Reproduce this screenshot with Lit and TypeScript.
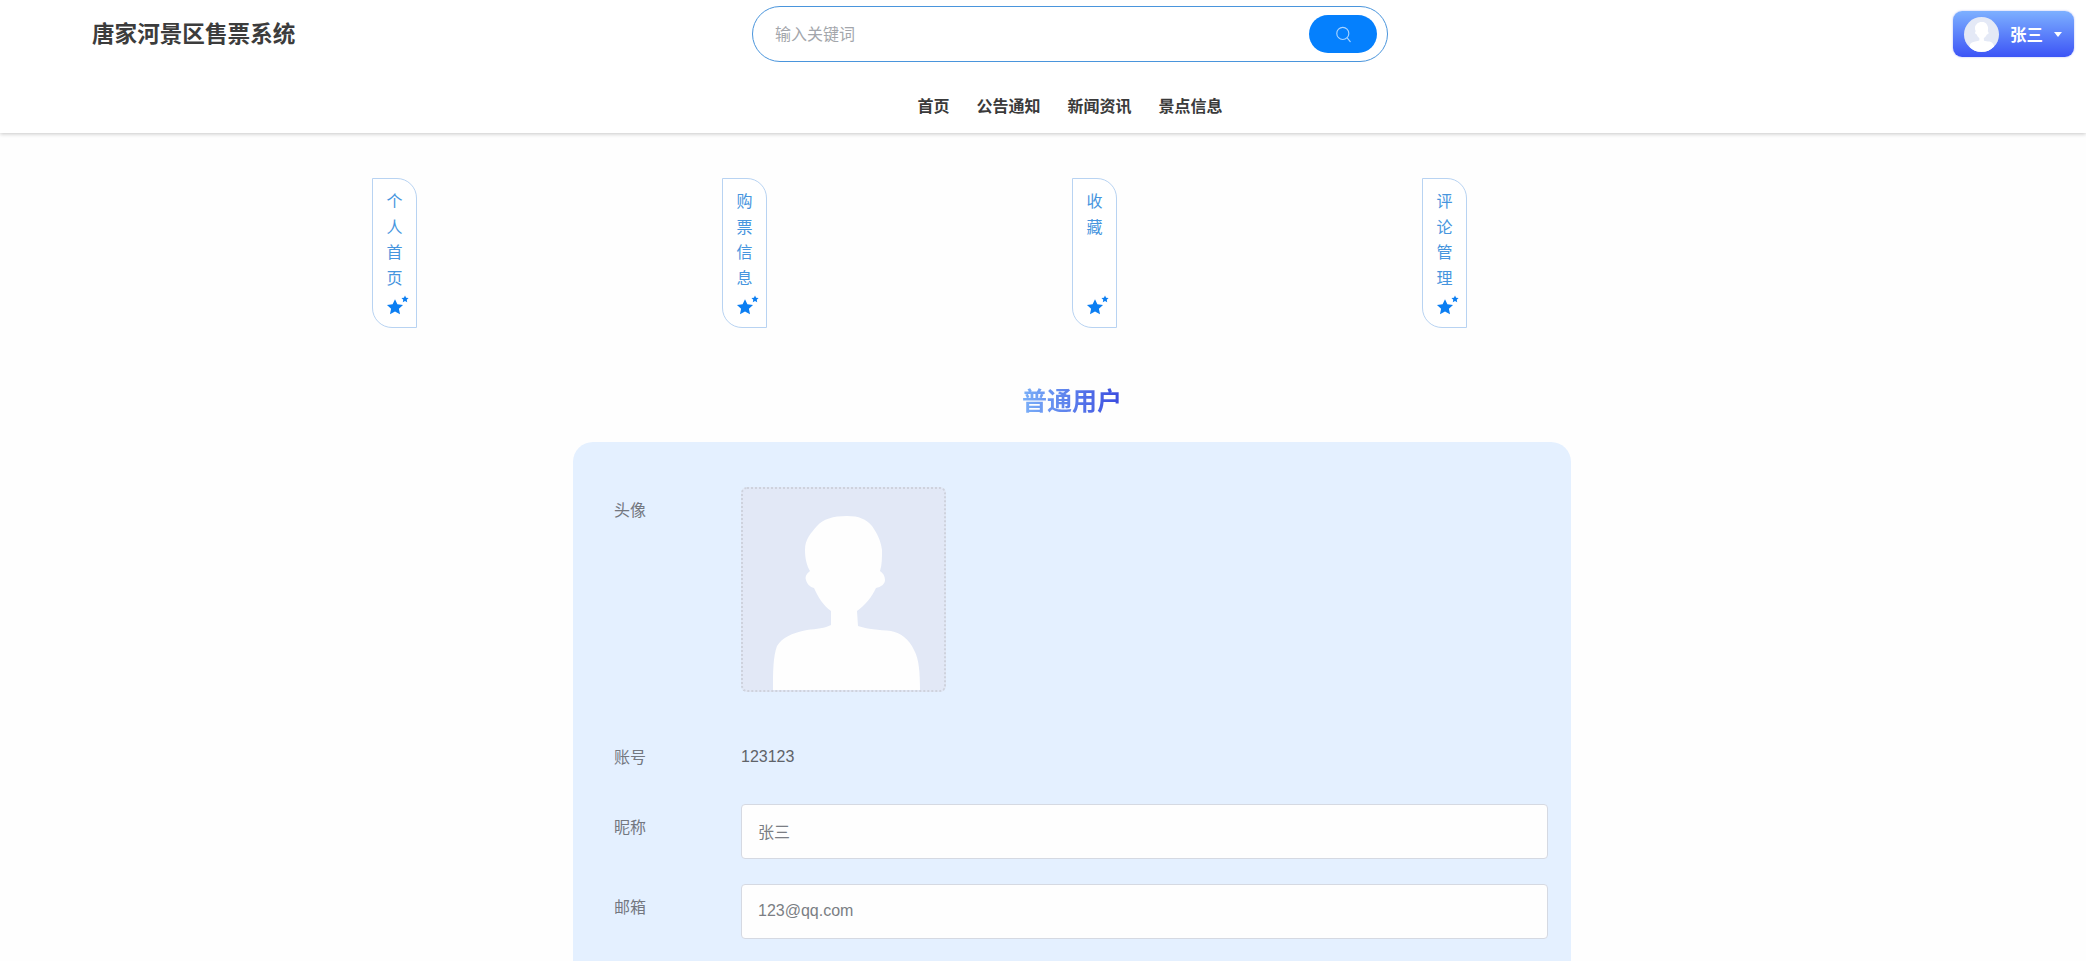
import { LitElement, html, css, svg } from "lit";
import { customElement } from "lit/decorators.js";

const star = svg`<path d="M12 1.5l3.2 6.9 7.5.9-5.5 5.1 1.5 7.4L12 18.1l-6.7 3.7 1.5-7.4L1.3 9.3l7.5-.9z"/>`;
const person = svg`<path d="M106 29C92 29 82 32 76 39C70 46 64 52 64 63C64 72 66 79 69 84C65 87 64 90 65 93C66 97 69 100 73 101C77 110 82 118 90 124L90 138C84 141 76 142 66 143C50 146 41 151 36 159C32 170 32 185 32 203L179 203C179 185 178 172 173 163C168 152 160 146 150 144C138 143 126 142 117 139L116 124C124 118 131 110 135 101C140 100 144 97 144 93C144 89 142 86 139 84C141 78 141 71 141 63C140 54 136 46 131 39C125 32 118 29 106 29Z"/>`;

@customElement("app-root")
export class AppRoot extends LitElement {
  static styles = css`
    :host {
      display: block;
      height: 961px;
      overflow: hidden;
      background: #fefefe;
      font-family: "Noto Sans CJK SC", "Liberation Sans", sans-serif;
    }
    .header {
      height: 133px;
      background: #fff;
      box-shadow: 0 1px 4px rgba(0, 0, 0, 0.22);
      position: relative;
    }
    .top {
      display: grid;
      grid-template-columns: 752px 636px 1fr;
      height: 73px;
      align-items: start;
    }
    .brand {
      padding: 15px 0 0 92px;
      font-size: 22.6px;
      line-height: 36px;
      font-weight: 700;
      color: #3c3c3c;
    }
    .search {
      margin-top: 6px;
      height: 56px;
      box-sizing: border-box;
      border: 1.5px solid #4a95dc;
      border-radius: 28px;
      display: flex;
      align-items: center;
      padding: 0 10px 0 21px;
      background: #fff;
    }
    .search input {
      flex: 1;
      min-width: 0;
      border: 0;
      outline: 0;
      background: transparent;
      padding: 0 2px 2px 1px;
      font: 400 16px "Noto Sans CJK SC", "Liberation Sans", sans-serif;
      color: #555;
    }
    .search input::placeholder {
      color: #a3a6ab;
    }
    .search-btn {
      width: 68px;
      height: 38px;
      border-radius: 19px;
      background: #0580fd;
      display: flex;
      align-items: center;
      justify-content: center;
    }
    .search-btn svg {
      width: 17px;
      height: 17px;
    }
    .user-wrap {
      display: flex;
      justify-content: flex-end;
      padding: 11px 12px 0 0;
    }
    .user {
      width: 121px;
      height: 46px;
      box-sizing: border-box;
      border-radius: 9px;
      background: linear-gradient(180deg, #7db0ff, #3c54f6);
      display: flex;
      align-items: center;
      padding-left: 11px;
      color: #fff;
      font-size: 16.5px;
      box-shadow: 0 0 2px rgba(80, 100, 240, 0.5);
    }
    .avatar {
      width: 35px;
      height: 35px;
      border-radius: 50%;
      background: #e4e9f6;
      overflow: hidden;
      flex: none;
    }
    .avatar svg {
      width: 100%;
      height: 100%;
      display: block;
    }
    .user .name {
      margin-left: 11px;
      font-weight: 700;
    }
    .caret {
      margin-left: 11px;
      width: 0;
      height: 0;
      border-left: 4.5px solid transparent;
      border-right: 4.5px solid transparent;
      border-top: 5px solid #fff;
    }
    .nav {
      display: flex;
      justify-content: center;
      gap: 27px;
      padding: 18px 0 0 54px;
      font-size: 16px;
      line-height: 28px;
      font-weight: 700;
      color: #3a3a3a;
    }
    .tabs {
      width: 1095px;
      margin: 45px 0 0 372px;
      display: flex;
      justify-content: space-between;
    }
    .tab {
      position: relative;
      width: 45px;
      height: 150px;
      box-sizing: border-box;
      padding-top: 9px;
      border: 1.5px solid #b8d3f2;
      border-radius: 0 20px 0 20px;
      background: #fff;
      color: #4695de;
      font-size: 16px;
      line-height: 25.5px;
      text-align: center;
    }
    .tab div {
      height: 25.5px;
    }
    .star {
      position: absolute;
      left: 13px;
      top: 119px;
      width: 18px;
      height: 18px;
      fill: #0b7ef2;
    }
    .star.mini {
      left: 28px;
      top: 116px;
      width: 8px;
      height: 8px;
    }
    .heading {
      margin: 51px 0 23px;
      padding-left: 58px;
      text-align: center;
      font-size: 25px;
      line-height: 40px;
      font-weight: 700;
    }
    .heading span {
      background: linear-gradient(90deg, #7bb0f8, #3a4adf);
      -webkit-background-clip: text;
      background-clip: text;
      color: transparent;
    }
    .card {
      width: 998px;
      height: 560px;
      margin-left: 573px;
      box-sizing: border-box;
      padding: 45px 23px 0 41px;
      border-radius: 20px;
      background: #e4f0ff;
    }
    .row {
      display: flex;
      align-items: flex-start;
      margin-bottom: 25px;
    }
    .row.photo {
      margin-bottom: 43px;
    }
    .label {
      width: 127px;
      flex: none;
      font-size: 16px;
      line-height: 44px;
      color: #73777f;
    }
    .label.tight {
      line-height: 42px;
    }
    .value {
      font: 400 16px/44px "Liberation Sans", "Noto Sans CJK SC", sans-serif;
      color: #5f6369;
    }
    .photo-box {
      width: 205px;
      height: 205px;
      box-sizing: border-box;
      border: 2px dotted #ced2dd;
      border-radius: 6px;
      background: #e2e8f6;
      overflow: hidden;
    }
    .photo-box svg {
      width: 205px;
      height: 205px;
      display: block;
      margin: -2px;
    }
    .field {
      flex: 1;
      min-width: 0;
      height: 55px;
      box-sizing: border-box;
      border: 1.5px solid #d5d9e2;
      border-radius: 4px;
      background: #fefefe;
      padding: 0 16px 2px;
      outline: 0;
      font: 400 16px "Liberation Sans", "Noto Sans CJK SC", sans-serif;
      color: #7b7e84;
    }
  `;

  private tabs = [
    ["个", "人", "首", "页"],
    ["购", "票", "信", "息"],
    ["收", "藏"],
    ["评", "论", "管", "理"],
  ];

  render() {
    return html`
      <header class="header">
        <div class="top">
          <div class="brand">唐家河景区售票系统</div>
          <div class="search">
            <input placeholder="输入关键词" />
            <div class="search-btn">
              <svg viewBox="0 0 24 24" fill="none" stroke="#a9d3ff" stroke-width="1.6" stroke-linecap="round">
                <circle cx="11" cy="10.5" r="8.5" />
                <path d="M17.5 17l4 5" />
              </svg>
            </div>
          </div>
          <div class="user-wrap">
            <div class="user">
              <div class="avatar">
                <svg viewBox="0 0 205 205" fill="#fff">${person}</svg>
              </div>
              <span class="name">张三</span>
              <span class="caret"></span>
            </div>
          </div>
        </div>
        <nav class="nav">
          <span>首页</span><span>公告通知</span><span>新闻资讯</span><span>景点信息</span>
        </nav>
      </header>

      <div class="tabs">
        ${this.tabs.map(
          (chars) => html`
            <div class="tab">
              ${chars.map((c) => html`<div>${c}</div>`)}
              <svg class="star" viewBox="0 0 24 24">${star}</svg>
              <svg class="star mini" viewBox="0 0 24 24">${star}</svg>
            </div>
          `
        )}
      </div>

      <div class="heading"><span>普通用户</span></div>

      <section class="card">
        <div class="row photo">
          <div class="label">头像</div>
          <div class="photo-box">
            <svg viewBox="0 0 205 205" fill="#fefefe">${person}</svg>
          </div>
        </div>
        <div class="row">
          <div class="label tight">账号</div>
          <div class="value">123123</div>
        </div>
        <div class="row">
          <div class="label">昵称</div>
          <input class="field" .value=${"张三"} />
        </div>
        <div class="row">
          <div class="label">邮箱</div>
          <input class="field" .value=${"123@qq.com"} />
        </div>
      </section>
    `;
  }
}
